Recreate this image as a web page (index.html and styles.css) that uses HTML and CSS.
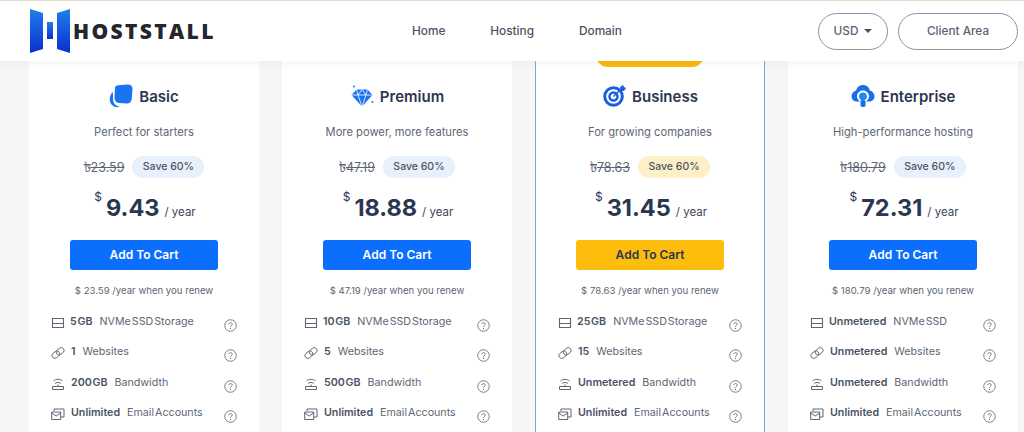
FILE: index.html
```html
<!DOCTYPE html>
<html lang="en">
<head>
<meta charset="utf-8">
<title>Hoststall</title>
<link rel="stylesheet" href="styles.css">
</head>
<body>
<svg class="defs" width="0" height="0" aria-hidden="true">
  <defs>
    <linearGradient id="lg" x1="0" y1="0" x2="0" y2="1"><stop offset="0" stop-color="#1f7fe8"/><stop offset="1" stop-color="#0a2fd0"/></linearGradient>
    <symbol id="i-disk" viewBox="0 0 14 14"><path d="M1.500 2.500h11v9h-11zM1.500 7.500h11" fill="none" stroke="currentColor" stroke-width="1.100"/></symbol>
    <symbol id="i-link" viewBox="0 0 14 14"><g fill="none" stroke="currentColor" stroke-width=".9" transform="rotate(-38 7 7)"><rect x="0" y="4.200" width="8.500" height="5.600" rx="2.800"/><rect x="5.500" y="4.200" width="8.500" height="5.600" rx="2.800"/></g></symbol>
    <symbol id="i-band" viewBox="0 0 14 14"><path d="M1.500 9.500h11v3h-11zM4 6.500c1.600-1.400 4.400-1.400 6 0M2.500 4c2.600-2.200 6.400-2.200 9 0M7 7.500v2" fill="none" stroke="currentColor" stroke-width="1"/></symbol>
    <symbol id="i-mail" viewBox="0 0 14 14"><path d="M3 4V2h10v8h-3M.7 5h9v7.500h-9zM.7 6l4.500 3 4.500-3" fill="none" stroke="currentColor" stroke-width="1"/></symbol>
    <symbol id="i-help" viewBox="0 0 14 14"><circle cx="7" cy="7" r="6.200" fill="none" stroke="currentColor" stroke-width="0.900"/><path d="M5.200 5.600c0-2.300 3.700-2.300 3.700-.1 0 1.400-1.900 1.400-1.900 2.900" fill="none" stroke="currentColor" stroke-width="0.900"/><circle cx="7" cy="10.100" r=".6" fill="currentColor"/></symbol>
  </defs>
</svg>

<header class="site-header">
  <a class="logo">
    <svg class="logo-mark" viewBox="0 0 40 44" width="40" height="44">
      <path d="M0 0l13 4v36L0 44z" fill="url(#lg)"/>
      <rect x="17" y="13" width="6" height="17" fill="url(#lg)"/>
      <path d="M27 4l13-4v44l-13-4z" fill="url(#lg)"/>
    </svg>
    <span class="logo-text">HOSTSTALL</span>
  </a>
  <nav class="nav">
    <a>Home</a>
    <a>Hosting</a>
    <a>Domain</a>
  </nav>
  <div class="actions">
    <button class="pill pill-usd">USD <span class="caret"></span></button>
    <button class="pill pill-client">Client Area</button>
  </div>
</header>

<main class="plans">
  <section class="card">
    <h2 class="plan-title">
      <svg class="plan-icon" viewBox="0 0 24 24"><path d="M3.600 8C.6 11-.4 17 2.500 20.500c1.800 2.200 5 3.300 8 2.300-3-.8-5.400-2.200-6.200-5.500-.6-3 .2-6.300-.7-9.300z" fill="#1a73f0"/><path d="M9 1.200l9.500-.7c3.400-.1 5.200 1.800 5 5l-.8 9.500c-.3 3-2.200 4.800-5.200 4.600l-7.500-.6c-3-.3-4.600-2.200-4.500-5.200l.4-8.600C5.600 2.900 6.700 1.500 9 1.200z" fill="#1a73f0"/></svg>
      Basic
    </h2>
    <p class="tagline">Perfect for starters</p>
    <div class="price-old-row"><s class="old"><span class="tk">৳</span>23.59</s><span class="save">Save 60%</span></div>
    <div class="price"><sup class="cur">$</sup><strong class="amount">9.43</strong><span class="per">/ year</span></div>
    <button class="cart">Add To Cart</button>
    <p class="renew">$ 23.59 /year when you renew</p>
    <ul class="features">
      <li><svg class="fi"><use href="#i-disk"/></svg><span class="ft"><b>5 GB</b>NVMe SSD Storage</span><svg class="help"><use href="#i-help"/></svg></li>
      <li><svg class="fi"><use href="#i-link"/></svg><span class="ft"><b>1</b>Websites</span><svg class="help"><use href="#i-help"/></svg></li>
      <li><svg class="fi"><use href="#i-band"/></svg><span class="ft"><b>200 GB</b>Bandwidth</span><svg class="help"><use href="#i-help"/></svg></li>
      <li><svg class="fi"><use href="#i-mail"/></svg><span class="ft"><b>Unlimited</b>Email Accounts</span><svg class="help"><use href="#i-help"/></svg></li>
    </ul>
  </section>

  <section class="card">
    <h2 class="plan-title">
      <svg class="plan-icon" viewBox="0 0 24 24"><path d="M6.500 5.500h11l5 5.500L12 22.500 1.500 11z" fill="#1a73f0"/><path d="M1.500 11h21M8 11l4 11.500L16 11M6.500 5.500L8 11l4-5.500 4 5.500 1.500-5.500" fill="none" stroke="#fff" stroke-width=".8"/><circle cx="4" cy="2.500" r="1" fill="#1a73f0"/><circle cx="22.500" cy="18" r="1" fill="#1a73f0"/></svg>
      Premium
    </h2>
    <p class="tagline">More power, more features</p>
    <div class="price-old-row"><s class="old"><span class="tk">৳</span>47.19</s><span class="save">Save 60%</span></div>
    <div class="price"><sup class="cur">$</sup><strong class="amount">18.88</strong><span class="per">/ year</span></div>
    <button class="cart">Add To Cart</button>
    <p class="renew">$ 47.19 /year when you renew</p>
    <ul class="features">
      <li><svg class="fi"><use href="#i-disk"/></svg><span class="ft"><b>10 GB</b>NVMe SSD Storage</span><svg class="help"><use href="#i-help"/></svg></li>
      <li><svg class="fi"><use href="#i-link"/></svg><span class="ft"><b>5</b>Websites</span><svg class="help"><use href="#i-help"/></svg></li>
      <li><svg class="fi"><use href="#i-band"/></svg><span class="ft"><b>500 GB</b>Bandwidth</span><svg class="help"><use href="#i-help"/></svg></li>
      <li><svg class="fi"><use href="#i-mail"/></svg><span class="ft"><b>Unlimited</b>Email Accounts</span><svg class="help"><use href="#i-help"/></svg></li>
    </ul>
  </section>

  <section class="card card-featured">
    <div class="ribbon"></div>
    <h2 class="plan-title">
      <svg class="plan-icon" viewBox="0 0 24 24"><circle cx="11.500" cy="12.500" r="8.800" fill="none" stroke="#1a5fe0" stroke-width="3"/><circle cx="11.500" cy="12.500" r="4" fill="none" stroke="#1a5fe0" stroke-width="2.500"/><path d="M11.500 12.500L20 4" stroke="#1a5fe0" stroke-width="1.500"/><path d="M18 3l3-2 1 2 2 1-2 3h-3z" fill="#1a5fe0"/></svg>
      Business
    </h2>
    <p class="tagline">For growing companies</p>
    <div class="price-old-row"><s class="old"><span class="tk">৳</span>78.63</s><span class="save save-gold">Save 60%</span></div>
    <div class="price"><sup class="cur">$</sup><strong class="amount">31.45</strong><span class="per">/ year</span></div>
    <button class="cart cart-gold">Add To Cart</button>
    <p class="renew">$ 78.63 /year when you renew</p>
    <ul class="features">
      <li><svg class="fi"><use href="#i-disk"/></svg><span class="ft"><b>25 GB</b>NVMe SSD Storage</span><svg class="help"><use href="#i-help"/></svg></li>
      <li><svg class="fi"><use href="#i-link"/></svg><span class="ft"><b>15</b>Websites</span><svg class="help"><use href="#i-help"/></svg></li>
      <li><svg class="fi"><use href="#i-band"/></svg><span class="ft"><b>Unmetered</b>Bandwidth</span><svg class="help"><use href="#i-help"/></svg></li>
      <li><svg class="fi"><use href="#i-mail"/></svg><span class="ft"><b>Unlimited</b>Email Accounts</span><svg class="help"><use href="#i-help"/></svg></li>
    </ul>
  </section>

  <section class="card">
    <h2 class="plan-title">
      <svg class="plan-icon" viewBox="0 0 24 24"><path d="M12 1c3.600 0 6.200 2.400 6.800 5.400 2.800.8 4.700 3 4.700 5.800 0 2.600-1.800 4.800-4.500 5.300H5c-2.700-.5-4.500-2.700-4.500-5.300 0-2.800 1.900-5 4.700-5.800C5.800 3.400 8.400 1 12 1z" fill="#1a6fe8"/><path d="M12 6.500c3.300 0 6 2.500 6 5.700 0 2.500-1.600 3.700-2.800 5.300H8.800C7.600 15.900 6 14.700 6 12.200c0-3.200 2.700-5.700 6-5.700z" fill="#fff"/><circle cx="12" cy="12.300" r="3.900" fill="#1a8cf0"/><rect x="9.500" y="16" width="5" height="7" rx="1.800" fill="#1a6fe8"/></svg>
      Enterprise
    </h2>
    <p class="tagline">High-performance hosting</p>
    <div class="price-old-row"><s class="old"><span class="tk">৳</span>180.79</s><span class="save">Save 60%</span></div>
    <div class="price"><sup class="cur">$</sup><strong class="amount">72.31</strong><span class="per">/ year</span></div>
    <button class="cart">Add To Cart</button>
    <p class="renew">$ 180.79 /year when you renew</p>
    <ul class="features">
      <li><svg class="fi"><use href="#i-disk"/></svg><span class="ft"><b>Unmetered</b>NVMe SSD</span><svg class="help"><use href="#i-help"/></svg></li>
      <li><svg class="fi"><use href="#i-link"/></svg><span class="ft"><b>Unmetered</b>Websites</span><svg class="help"><use href="#i-help"/></svg></li>
      <li><svg class="fi"><use href="#i-band"/></svg><span class="ft"><b>Unmetered</b>Bandwidth</span><svg class="help"><use href="#i-help"/></svg></li>
      <li><svg class="fi"><use href="#i-mail"/></svg><span class="ft"><b>Unlimited</b>Email Accounts</span><svg class="help"><use href="#i-help"/></svg></li>
    </ul>
  </section>
</main>
</body>
</html>
```

FILE: styles.css
```css
* { box-sizing: border-box; }
html, body { height: 100%; }
body {
  margin: 0;
  height: 432px;
  overflow: hidden;
  background: #f6f6f7;
  font-family: Inter, "Noto Sans", sans-serif;
  color: #2b3548;
}
.defs { position: absolute; }

.site-header {
  position: relative;
  z-index: 2;
  height: 61px;
  display: flex;
  align-items: center;
  background: #fff;
  border-top: 1px solid #e4dccb;
  padding: 0 6px 0 30px;
  box-shadow: 0 2px 10px rgba(30, 40, 60, .05);
}
.logo { display: flex; align-items: center; width: 382px; gap: 3px; }
.logo-mark { flex: none; }
.logo-text {
  font-family: "Open Sans", sans-serif;
  font-weight: 800;
  font-size: 21px;
  letter-spacing: 2.350px;
  color: #23262b;
}
.nav { display: flex; gap: 45px; font-size: 11.800px; font-weight: 500; color: #4a5365; }
.actions { margin-left: auto; display: flex; gap: 10px; }
.pill {
  height: 37px;
  border: 1px solid #8e939b;
  border-radius: 19px;
  background: #fff;
  font: 500 11.800px Inter, sans-serif;
  color: #5a6374;
}
.pill-usd { width: 70px; display: flex; align-items: center; justify-content: center; gap: 6px; }
.pill-client { width: 120px; }
.caret { width: 0; height: 0; border: 4px solid transparent; border-top-color: #4a5365; border-bottom: 0; }

.plans {
  height: 371px;
  overflow: hidden;
  display: grid;
  grid-template-columns: repeat(4, 230px);
  column-gap: 23px;
  padding-left: 29px;
}
.card {
  position: relative;
  height: 420px;
  background: #fff;
  padding-top: 23px;
  text-align: center;
}
.card-featured { border-left: 1px solid #6fa8e8; border-right: 1px solid #6fa8e8; }
.ribbon {
  position: absolute;
  top: -18px;
  left: 60px;
  width: 108px;
  height: 24px;
  background: #fcb80c;
  border-radius: 12px;
}
.plan-title {
  margin: 0;
  height: 24px;
  display: flex;
  align-items: center;
  justify-content: center;
  gap: 6px;
  font-size: 15px;
  font-weight: 600;
  color: #2b3650;
}
.plan-icon { width: 24px; height: 24px; flex: none; }
.tagline { margin: 17px 0 0; font-size: 11.200px; line-height: 14px; color: #5d6675; }
.price-old-row {
  margin-top: 17px;
  height: 22px;
  display: flex;
  align-items: center;
  justify-content: center;
  gap: 8px;
}
.old { font-size: 12.500px; color: #5d6675; }
.tk { font-size: 15px; line-height: 14px; }
.save {
  width: 72px;
  height: 22px;
  line-height: 22px;
  border-radius: 11px;
  background: #e8f0fb;
  font-size: 10.500px;
  font-weight: 500;
  color: #4a5365;
}
.save-gold { background: #fdf0c8; }
.price {
  margin-top: 12px;
  height: 36px;
  padding-left: 2px;
  display: flex;
  align-items: flex-end;
  justify-content: center;
}
.cur { font-size: 12px; line-height: 14px; align-self: flex-start; margin: 0 4px 0 0; vertical-align: baseline; color: #2b3650; }
.amount { font-size: 23.500px; line-height: 36px; font-weight: 700; color: #2b3650; }
.per { font-size: 11.500px; line-height: 14px; margin: 0 0 7px 5px; color: #3d4657; }
.cart {
  display: block;
  width: 148px;
  height: 30px;
  margin: 14px auto 0;
  padding: 0 0 1px;
  border: 0;
  border-radius: 3px;
  background: #0b6efd;
  color: #fff;
  font: 600 12px Inter, sans-serif;
}
.cart-gold { background: #fdbd0c; color: #2b3650; }
.renew { margin: 14px 0 0; font-size: 9.600px; line-height: 13px; color: #5d6675; }
.features { list-style: none; margin: 18px 0 0; padding: 0 22px; text-align: left; }
.features li { display: flex; align-items: flex-start; height: 30.400px; font-size: 10.700px; line-height: 14px; color: #5d6675; word-spacing: -2px; }
.fi { width: 14px; height: 14px; flex: none; margin-right: 5px; margin-top: 1px; color: #5d6675; }
.features li + li .fi { margin-right: 6px; }
.ft { flex: 1; white-space: nowrap; }
.ft b { font-weight: 600; color: #4a5365; margin-right: 7px; }
.help { width: 13px; height: 13px; flex: none; margin-top: 4px; color: #5d6675; }
```
